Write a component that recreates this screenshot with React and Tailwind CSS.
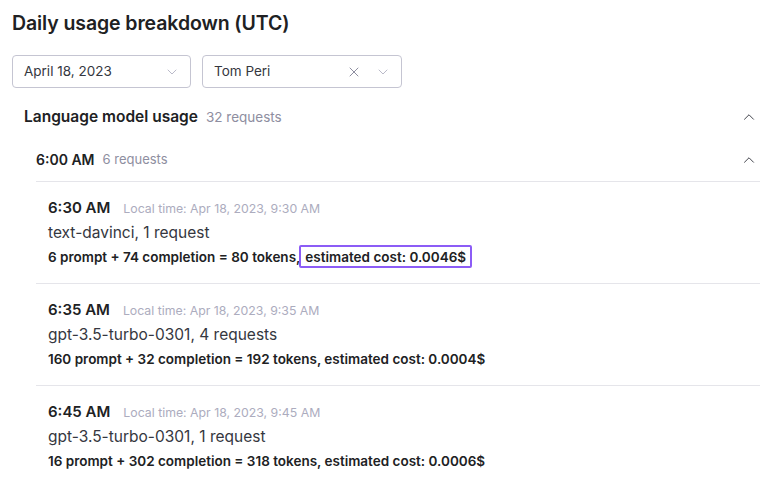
import { ChevronDown, ChevronUp, X } from "lucide-react";

const entries = [
  {
    time: "6:30 AM",
    local: "Local time: Apr 18, 2023, 9:30 AM",
    model: "text-davinci, 1 request",
    tokens: "6 prompt + 74 completion = 80 tokens,",
    cost: "estimated cost: 0.0046$",
    highlight: true,
  },
  {
    time: "6:35 AM",
    local: "Local time: Apr 18, 2023, 9:35 AM",
    model: "gpt-3.5-turbo-0301, 4 requests",
    tokens: "160 prompt + 32 completion = 192 tokens,",
    cost: "estimated cost: 0.0004$",
  },
  {
    time: "6:45 AM",
    local: "Local time: Apr 18, 2023, 9:45 AM",
    model: "gpt-3.5-turbo-0301, 1 request",
    tokens: "16 prompt + 302 completion = 318 tokens,",
    cost: "estimated cost: 0.0006$",
  },
];

const Select = ({ value, clearable, width }) => (
  <div
    className={`flex h-[33px] items-center rounded-[4px] border border-[#c5c5d2] pl-[11px] pr-[10px] ${width}`}
  >
    <span className="flex-1 text-[13.5px] text-[#353740]">{value}</span>
    {clearable && (
      <X className="mr-[13px] h-[16px] w-[16px] text-[#8e8ea0]" strokeWidth={1.5} />
    )}
    <ChevronDown className="h-[16px] w-[16px] text-[#acacbe]" strokeWidth={1.25} />
  </div>
);

const App = () => {
  return (
    <div className="h-[486px] w-[780px] overflow-hidden bg-white px-[12px] pt-[9px] font-['Inter',sans-serif] text-[#202123]">
      <h1 className="text-[19.5px] font-semibold leading-[28px] tracking-[-0.1px]">
        Daily usage breakdown (UTC)
      </h1>

      <div className="mt-[18px] flex gap-[11px]">
        <Select value="April 18, 2023" width="w-[179px]" />
        <Select value="Tom Peri" clearable width="w-[200px]" />
      </div>

      <div className="mt-[17px] flex items-center pl-[12px] pr-[10px]">
        <span className="text-[15.5px] font-semibold">Language model usage</span>
        <span className="ml-[8px] text-[13.5px] text-[#8e8ea0]">32 requests</span>
        <ChevronUp className="ml-auto h-[18px] w-[18px] text-[#353740]" strokeWidth={1.25} />
      </div>

      <div className="pl-[24px] pr-[8px]">
        <div className="mt-[21px] flex items-center border-b border-[#e5e5ea] pb-[11px] pl-0 pr-[2px]">
          <span className="text-[14px] font-semibold">6:00 AM</span>
          <span className="ml-[8px] text-[13px] text-[#8e8ea0]">6 requests</span>
          <ChevronUp className="ml-auto h-[18px] w-[18px] text-[#353740]" strokeWidth={1.25} />
        </div>

        {entries.map((e, i) => (
          <div
            key={e.time}
            className={`pl-[12px] pt-[16px] ${i < entries.length - 1 ? "border-b border-[#e5e5ea] pb-[14px]" : ""}`}
          >
            <div className="flex items-baseline leading-[20px]">
              <span className="text-[15px] font-semibold">{e.time}</span>
              <span className="ml-[13px] text-[12.3px] text-[#acacbe]">{e.local}</span>
            </div>
            <div className="mt-[2px] text-[15.5px] leading-[24px] text-[#353740]">{e.model}</div>
            <div className="text-[13.5px] font-semibold leading-[24px] text-[#202123]">
              {e.tokens}
              {e.highlight ? (
                <span className="relative ml-[5px]">
                  {e.cost}
                  <span className="absolute -left-[6px] -right-[6px] -top-[4px] -bottom-[3px] rounded-[2px] border-2 border-[#8c5cf6]" />
                </span>
              ) : (
                <span> {e.cost}</span>
              )}
            </div>
          </div>
        ))}
      </div>
    </div>
  );
};

export default App;
